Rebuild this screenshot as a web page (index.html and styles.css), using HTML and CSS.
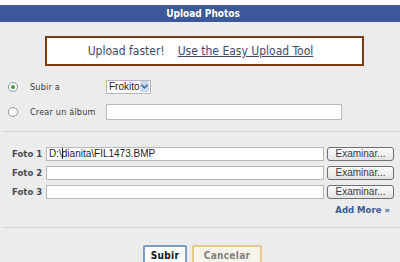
FILE: index.html
```html
<!DOCTYPE HTML>
<html>
<head>
    <title>Upload Photos</title>
    <link rel="stylesheet" href="styles.css">
</head>
<body>

<div class="dialog">
    <h2 class="dialog-title">Upload Photos</h2>

    <div class="dialog-body">
        <div class="upsell">
            <span class="upsell-text">Upload faster!</span>
            <a href="#" class="upsell-link">Use the Easy Upload Tool</a>
        </div>

        <div class="album-choice">
            <div class="choice-row">
                <span class="radio checked"></span>
                <span class="choice-label">Subir a</span>
                <span class="select">
                    <span class="select-value">Frokito</span>
                    <span class="select-arrow">
                        <svg width="7" height="5" viewBox="0 0 7 5"><path d="M0.5 0.8 L3.5 3.8 L6.5 0.8" fill="none" stroke="#4d6aa8" stroke-width="1.6"/></svg>
                    </span>
                </span>
            </div>
            <div class="choice-row second">
                <span class="radio"></span>
                <span class="choice-label">Crear un álbum</span>
                <span class="text-box album-name"></span>
            </div>
        </div>

        <div class="divider"></div>

        <div class="photo-list">
            <span class="photo-label">Foto 1</span>
            <span class="text-box file-path">D:\<span class="caret"></span>dianita\FIL1473.BMP</span>
            <span class="browse">Examinar...</span>

            <span class="photo-label">Foto 2</span>
            <span class="text-box file-path"></span>
            <span class="browse">Examinar...</span>

            <span class="photo-label">Foto 3</span>
            <span class="text-box file-path"></span>
            <span class="browse">Examinar...</span>
        </div>

        <div class="add-more"><a href="#">Add More &raquo;</a></div>

        <div class="divider bottom"></div>

        <div class="actions">
            <button class="btn btn-primary">Subir</button>
            <button class="btn btn-cancel">Cancelar</button>
        </div>
    </div>
</div>

</body>
</html>
```

FILE: styles.css
```css
body {
    margin: 0;
    padding-top: 5px;
    background: #fff;
    font-family: "DejaVu Sans", Verdana, sans-serif;
    font-stretch: condensed;
    color: #333;
    overflow: hidden;
}

.dialog {
    background: #ececec;
    height: 257px;
}

.dialog-title {
    margin: 0;
    height: 17px;
    line-height: 17px;
    background: #3b5998;
    color: #fff;
    font-size: 10px;
    font-weight: bold;
    text-align: center;
    padding-left: 6px;
}

.dialog-body {
    padding-top: 14px;
}

.upsell {
    width: 307px;
    height: 26px;
    margin-left: 45px;
    border: 2px solid #7a3d12;
    background: #fff;
    display: flex;
    align-items: center;
    justify-content: center;
    gap: 13px;
    font-size: 12px;
    color: #404b68;
    padding-right: 8px;
}

.upsell-link {
    color: #404b68;
}

.album-choice {
    padding: 14px 0 0 7px;
}

.choice-row {
    display: flex;
    align-items: center;
    height: 13px;
}

.choice-row.second {
    margin-top: 11px;
    height: 16px;
}

.radio {
    width: 8px;
    height: 8px;
    border: 1px solid #8a97aa;
    border-radius: 50%;
    background: #fff;
    position: relative;
    margin-left: 1px;
}

.radio.checked::after {
    content: "";
    position: absolute;
    left: 2px;
    top: 2px;
    width: 4px;
    height: 4px;
    border-radius: 50%;
    background: #3ea43a;
}

.choice-label {
    font-size: 9px;
    letter-spacing: 0.2px;
    width: 76px;
    margin-left: 12px;
    color: #3a3a3a;
}

.select {
    display: flex;
    align-items: center;
    width: 43px;
    height: 12px;
    border: 1px solid #b7b7b7;
    background: #fff;
    font-family: "Liberation Sans", Arial, sans-serif;
    font-stretch: normal;
    font-size: 10px;
    color: #222;
}

.select-value {
    flex: 1;
    padding-left: 2px;
}

.select-arrow {
    width: 10px;
    height: 11px;
    margin-right: 1px;
    border-radius: 2px;
    background: #cbd9f0;
    display: flex;
    align-items: center;
    justify-content: center;
}

.text-box {
    display: block;
    background: #fff;
    border: 1px solid #b5b8bd;
    box-sizing: border-box;
}

.album-name {
    width: 236px;
    height: 16px;
}

.divider {
    margin: 11px 0 0 3px;
    height: 1px;
    background: #d2d2d2;
}

.photo-list {
    display: grid;
    grid-template-columns: 43px 278px 67px;
    grid-auto-rows: 14px;
    row-gap: 5px;
    column-gap: 3px;
    margin-top: 15px;
}

.photo-label {
    font-size: 9.5px;
    font-weight: bold;
    color: #4a4a4a;
    padding-left: 12px;
    line-height: 14px;
}

.file-path {
    font-family: "Liberation Sans", Arial, sans-serif;
    font-stretch: normal;
    font-size: 10px;
    line-height: 12px;
    color: #222;
    padding-left: 2px;
}

.caret {
    display: inline-block;
    width: 1px;
    height: 11px;
    background: #222;
    vertical-align: -2px;
    margin-right: -1px;
}

.browse {
    border: 1px solid #6b6f76;
    border-radius: 3px;
    background: linear-gradient(#fbfbfb, #e4e4e4);
    font-family: "Liberation Sans", Arial, sans-serif;
    font-stretch: normal;
    font-size: 10px;
    color: #3a3a3a;
    text-align: center;
    line-height: 12px;
}

.add-more {
    text-align: right;
    margin-top: 5px;
    padding-right: 10px;
    font-size: 9.5px;
    font-weight: bold;
}

.add-more a {
    color: #3b5998;
    text-decoration: none;
}

.divider.bottom {
    margin-top: 12px;
}

.actions {
    display: flex;
    justify-content: center;
    gap: 5px;
    margin-top: 17px;
    padding-left: 5px;
}

.btn {
    font-family: "DejaVu Sans", Verdana, sans-serif;
    font-stretch: condensed;
    font-size: 10px;
    font-weight: bold;
    letter-spacing: 0.3px;
    height: 20px;
    padding: 0;
    background: #fff;
    border-radius: 2px;
}

.btn-primary {
    width: 44px;
    border: 2px solid #7c9ac4;
    color: #111;
}

.btn-cancel {
    width: 70px;
    border: 2px solid #e8c98c;
    background: #f7f3ea;
    color: #808080;
}
```
